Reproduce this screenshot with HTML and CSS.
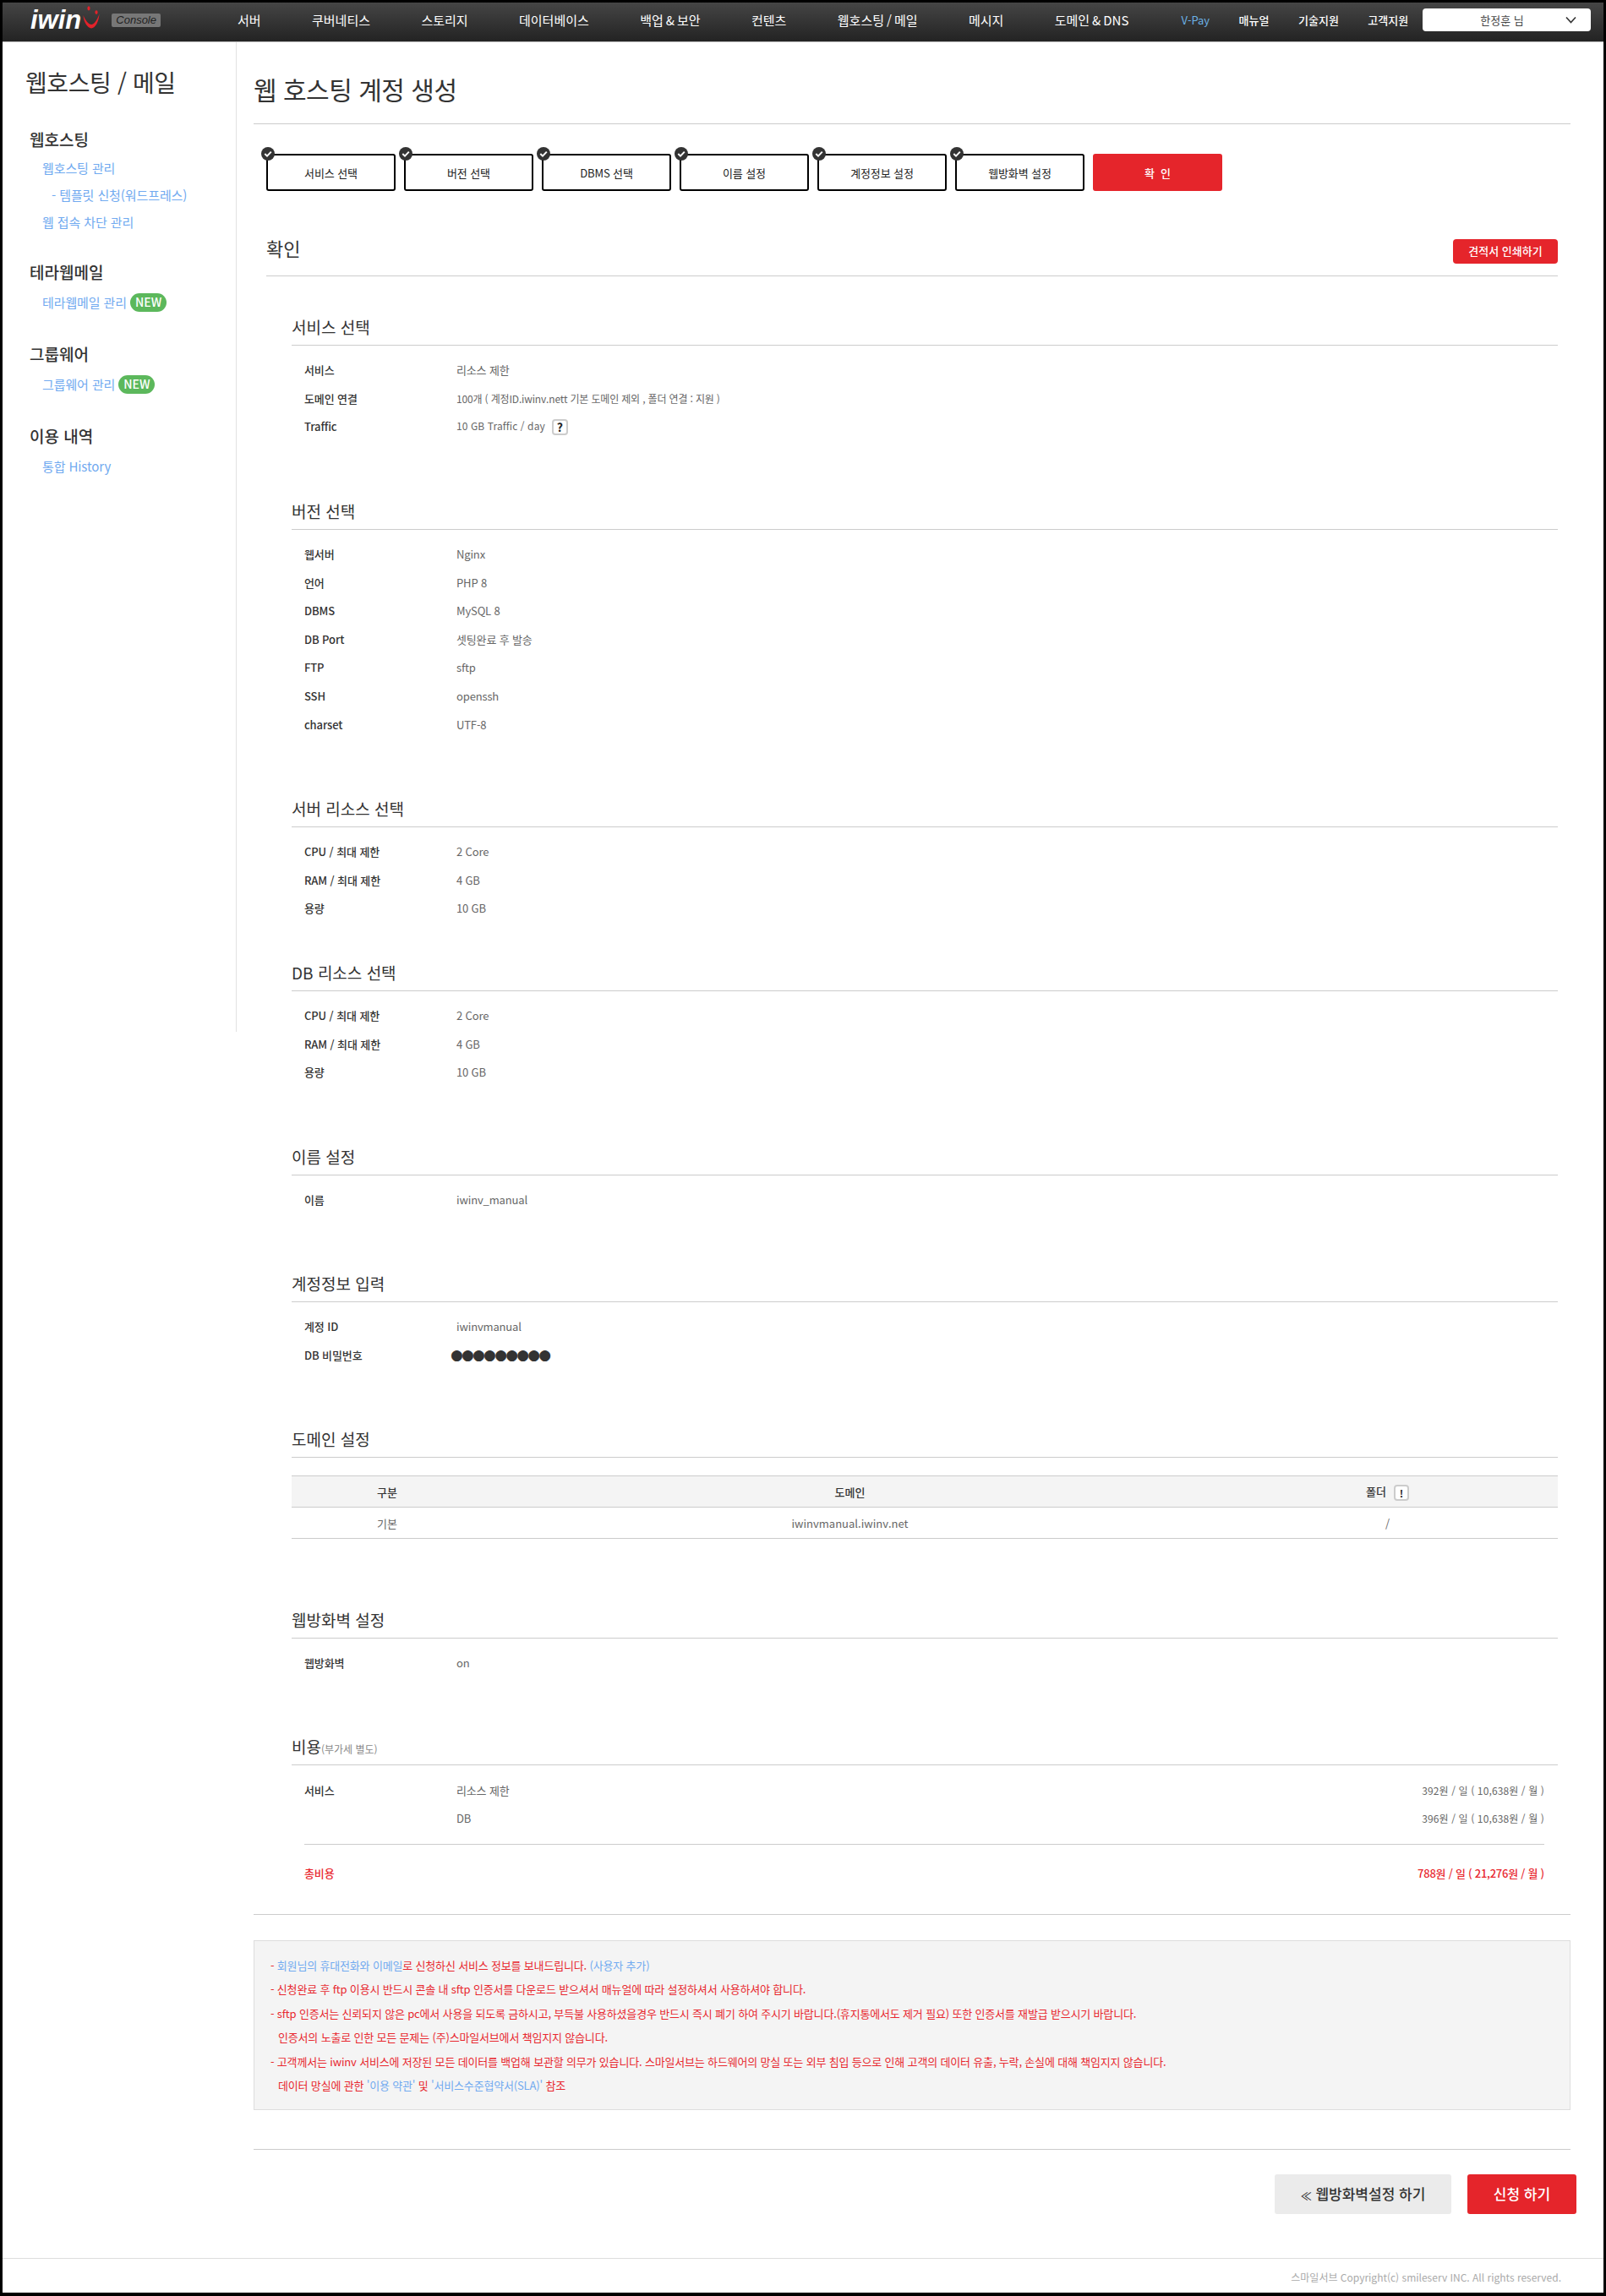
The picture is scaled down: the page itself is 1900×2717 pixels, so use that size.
FILE: index.html
```html
<!DOCTYPE html>
<html lang="ko">
<head>
<meta charset="utf-8">
<title>웹 호스팅 계정 생성</title>
<link rel="stylesheet" href="styles.css">
</head>
<body>
<div class="frame">
  <header class="topbar">
    <a class="logo">
      <span class="logo-word">iwin</span>
      <svg class="logo-smile" width="22" height="28" viewBox="0 0 22 28"><path d="M1.5 11 C2 20 7 26 11 26.5 C16 26.5 20 18 20.5 9.5 C18 16 15 21.5 11.5 22 C7.5 22 4 17 1.5 11 Z" fill="#e3222a"/><ellipse cx="8" cy="2.8" rx="1.6" ry="2.6" fill="#e3222a"/><ellipse cx="17" cy="7.6" rx="1.6" ry="2.4" fill="#e3222a"/></svg>
      <span class="logo-badge">Console</span>
    </a>
    <nav class="nav-main">
      <a>서버</a><a>쿠버네티스</a><a>스토리지</a><a>데이터베이스</a><a>백업 &amp; 보안</a><a>컨텐츠</a><a>웹호스팅 / 메일</a><a>메시지</a><a>도메인 &amp; DNS</a>
    </nav>
    <nav class="nav-side">
      <a class="vpay">V-Pay</a><a>매뉴얼</a><a>기술지원</a><a>고객지원</a>
    </nav>
    <div class="user-select">
      <span>한정훈 님</span>
      <svg class="chevron" width="13" height="9" viewBox="0 0 13 9"><path d="M1 1.5 L6.5 7.5 L12 1.5" fill="none" stroke="#333" stroke-width="1.6"/></svg>
    </div>
  </header>

  <div class="layout">
    <aside class="sidebar">
      <h2 class="side-title">웹호스팅 / 메일</h2>
      <div class="side-group">
        <h3>웹호스팅</h3>
        <a>웹호스팅 관리</a>
        <a class="sub-link">- 템플릿 신청(워드프레스)</a>
        <a>웹 접속 차단 관리</a>
      </div>
      <div class="side-group">
        <h3>테라웹메일</h3>
        <a>테라웹메일 관리 <span class="badge-new">NEW</span></a>
      </div>
      <div class="side-group">
        <h3>그룹웨어</h3>
        <a>그룹웨어 관리 <span class="badge-new">NEW</span></a>
      </div>
      <div class="side-group">
        <h3>이용 내역</h3>
        <a>통합 History</a>
      </div>
    </aside>

    <main class="main">
      <h1 class="page-title">웹 호스팅 계정 생성</h1>

      <ol class="steps">
        <li class="step done">서비스 선택<svg class="check" width="16" height="16" viewBox="0 0 16 16"><circle cx="8" cy="8" r="8" fill="#333"/><path d="M4.3 8 L7 10.6 L11.8 5.6" fill="none" stroke="#fff" stroke-width="2"/></svg></li>
        <li class="step done">버전 선택<svg class="check" width="16" height="16" viewBox="0 0 16 16"><circle cx="8" cy="8" r="8" fill="#333"/><path d="M4.3 8 L7 10.6 L11.8 5.6" fill="none" stroke="#fff" stroke-width="2"/></svg></li>
        <li class="step done">DBMS 선택<svg class="check" width="16" height="16" viewBox="0 0 16 16"><circle cx="8" cy="8" r="8" fill="#333"/><path d="M4.3 8 L7 10.6 L11.8 5.6" fill="none" stroke="#fff" stroke-width="2"/></svg></li>
        <li class="step done">이름 설정<svg class="check" width="16" height="16" viewBox="0 0 16 16"><circle cx="8" cy="8" r="8" fill="#333"/><path d="M4.3 8 L7 10.6 L11.8 5.6" fill="none" stroke="#fff" stroke-width="2"/></svg></li>
        <li class="step done">계정정보 설정<svg class="check" width="16" height="16" viewBox="0 0 16 16"><circle cx="8" cy="8" r="8" fill="#333"/><path d="M4.3 8 L7 10.6 L11.8 5.6" fill="none" stroke="#fff" stroke-width="2"/></svg></li>
        <li class="step done">웹방화벽 설정<svg class="check" width="16" height="16" viewBox="0 0 16 16"><circle cx="8" cy="8" r="8" fill="#333"/><path d="M4.3 8 L7 10.6 L11.8 5.6" fill="none" stroke="#fff" stroke-width="2"/></svg></li>
        <li class="step current">확 &nbsp;인</li>
      </ol>

      <div class="confirm">
        <div class="confirm-head">
          <h2>확인</h2>
          <a class="btn-print">견적서 인쇄하기</a>
        </div>

        <section class="block">
          <h3>서비스 선택</h3>
          <div class="rows">
            <div class="row"><span class="label">서비스</span><span class="value">리소스 제한</span></div>
            <div class="row"><span class="label">도메인 연결</span><span class="value value-sm">100개 ( 계정ID.iwinv.nett 기본 도메인 제외 , 폴더 연결 : 지원 )</span></div>
            <div class="row"><span class="label">Traffic</span><span class="value value-traffic">10 GB Traffic / day<span class="hint">?</span></span></div>
          </div>
        </section>

        <section class="block">
          <h3>버전 선택</h3>
          <div class="rows">
            <div class="row"><span class="label">웹서버</span><span class="value">Nginx</span></div>
            <div class="row"><span class="label">언어</span><span class="value">PHP 8</span></div>
            <div class="row"><span class="label">DBMS</span><span class="value">MySQL 8</span></div>
            <div class="row"><span class="label">DB Port</span><span class="value">셋팅완료 후 발송</span></div>
            <div class="row"><span class="label">FTP</span><span class="value">sftp</span></div>
            <div class="row"><span class="label">SSH</span><span class="value">openssh</span></div>
            <div class="row"><span class="label">charset</span><span class="value">UTF-8</span></div>
          </div>
        </section>

        <section class="block">
          <h3>서버 리소스 선택</h3>
          <div class="rows">
            <div class="row"><span class="label">CPU / 최대 제한</span><span class="value">2 Core</span></div>
            <div class="row"><span class="label">RAM / 최대 제한</span><span class="value">4 GB</span></div>
            <div class="row"><span class="label">용량</span><span class="value">10 GB</span></div>
          </div>
        </section>

        <section class="block block-tight">
          <h3>DB 리소스 선택</h3>
          <div class="rows">
            <div class="row"><span class="label">CPU / 최대 제한</span><span class="value">2 Core</span></div>
            <div class="row"><span class="label">RAM / 최대 제한</span><span class="value">4 GB</span></div>
            <div class="row"><span class="label">용량</span><span class="value">10 GB</span></div>
          </div>
        </section>

        <section class="block">
          <h3>이름 설정</h3>
          <div class="rows">
            <div class="row"><span class="label">이름</span><span class="value">iwinv_manual</span></div>
          </div>
        </section>

        <section class="block">
          <h3>계정정보 입력</h3>
          <div class="rows">
            <div class="row"><span class="label">계정 ID</span><span class="value">iwinvmanual</span></div>
            <div class="row"><span class="label">DB 비밀번호</span><span class="value dots">●●●●●●●●●</span></div>
          </div>
        </section>

        <section class="block block-table">
          <h3>도메인 설정</h3>
          <table class="domain-table">
            <thead>
              <tr><th class="col-a">구분</th><th class="col-b">도메인</th><th class="col-c">폴더<span class="hint hint-th">!</span></th></tr>
            </thead>
            <tbody>
              <tr><td>기본</td><td>iwinvmanual.iwinv.net</td><td>/</td></tr>
            </tbody>
          </table>
        </section>

        <section class="block">
          <h3>웹방화벽 설정</h3>
          <div class="rows">
            <div class="row"><span class="label">웹방화벽</span><span class="value">on</span></div>
          </div>
        </section>

        <section class="block">
          <h3>비용<small>(부가세 별도)</small></h3>
          <div class="rows">
            <div class="row"><span class="label">서비스</span><span class="value">리소스 제한</span><span class="price">392원 / 일 ( 10,638원 / 월 )</span></div>
            <div class="row"><span class="label"></span><span class="value">DB</span><span class="price">396원 / 일 ( 10,638원 / 월 )</span></div>
            <div class="row row-total"><span class="label">총비용</span><span class="price">788원 / 일 ( 21,276원 / 월 )</span></div>
          </div>
        </section>
      </div>

      <hr class="rule">

      <div class="notice">
        <p>- <a>회원님의 휴대전화와 이메일</a>로 신청하신 서비스 정보를 보내드립니다. <a>(사용자 추가)</a></p>
        <p>- 신청완료 후 ftp 이용시 반드시 콘솔 내 sftp 인증서를 다운로드 받으셔서 매뉴얼에 따라 설정하셔서 사용하셔야 합니다.</p>
        <p>- sftp 인증서는 신뢰되지 않은 pc에서 사용을 되도록 금하시고, 부득불 사용하셨을경우 반드시 즉시 폐기 하여 주시기 바랍니다.(휴지통에서도 제거 필요) 또한 인증서를 재발급 받으시기 바랍니다.</p>
        <p class="indent">인증서의 노출로 인한 모든 문제는 (주)스마일서브에서 책임지지 않습니다.</p>
        <p>- 고객께서는 iwinv 서비스에 저장된 모든 데이터를 백업해 보관할 의무가 있습니다. 스마일서브는 하드웨어의 망실 또는 외부 침입 등으로 인해 고객의 데이터 유출, 누락, 손실에 대해 책임지지 않습니다.</p>
        <p class="indent">데이터 망실에 관한 <a>'이용 약관'</a> 및 <a>'서비스수준협약서(SLA)'</a> 참조</p>
      </div>

      <div class="actions">
        <a class="btn btn-back"><span class="btn-arrows">≪</span> 웹방화벽설정 하기</a>
        <a class="btn btn-apply">신청 하기</a>
      </div>
    </main>
  </div>

  <footer class="footer">스마일서브 Copyright(c) smileserv INC. All rights reserved.</footer>
</div>
</body>
</html>
```
FILE: styles.css
```css
* { box-sizing: border-box; }
html, body { margin: 0; padding: 0; }
body {
  font-family: "Noto Sans CJK KR", "Noto Sans", sans-serif;
  font-size: 13px;
  color: #333;
  background: #fff;
}
h1, h2, h3, p, ol { margin: 0; padding: 0; }
ol { list-style: none; }

.frame {
  height: 2717px;
  border: solid #000;
  border-width: 3px 3px 4px 3px;
  display: flex;
  flex-direction: column;
  background: #fff;
}

/* header */
.topbar {
  flex: none;
  height: 47px;
  padding: 0 15px 5px 33px;
  display: flex;
  align-items: center;
  background: linear-gradient(#454545, #232323);
  border-bottom: 1px solid #bbb;
  color: #fff;
}
.logo { display: flex; align-items: center; width: 154px; flex: none; position: relative; }
.logo-word {
  font-family: "Liberation Sans", sans-serif;
  font-weight: 700;
  font-style: italic;
  font-size: 31px;
  line-height: 30px;
  color: #fff;
}
.logo-smile { margin-left: 1px; margin-top: -5px; flex: none; }
.logo-badge {
  margin-left: 13px;
  width: 58px;
  height: 16px;
  background: #777;
  border-radius: 2px;
  font-family: "Liberation Sans", sans-serif;
  font-style: italic;
  font-size: 13px;
  line-height: 16px;
  text-align: center;
  color: #222;
}
.nav-main { display: flex; gap: 60.4px; margin-left: 91px; font-size: 15px; word-spacing: -1.2px; flex: none; }
.nav-side { display: flex; gap: 34.5px; margin-left: 62px; font-size: 13px; font-weight: 500; flex: none; }
.vpay { color: #6cb2e6; font-weight: 400; }
.user-select {
  margin-left: auto;
  width: 199px;
  height: 27px;
  background: #fff;
  border-radius: 4px;
  display: flex;
  align-items: center;
  justify-content: center;
  position: relative;
  color: #444;
  font-size: 13px;
  padding-right: 11px;
}
.chevron { position: absolute; right: 17px; top: 9px; }

/* layout */
.layout { flex: 1; display: flex; align-items: flex-start; }
.sidebar {
  flex: none;
  width: 277px;
  height: 1171px;
  border-right: 1px solid #e2e2e2;
  padding: 26px 0 0 27px;
}
.side-title { font-size: 28px; font-weight: 400; line-height: 42px; letter-spacing: -0.4px; color: #333; white-space: nowrap; }
.side-group { padding-left: 5px; margin-bottom: 32px; }
.side-group:first-of-type { margin-top: 34px; margin-bottom: 30px; }
.side-group h3 { font-size: 19px; font-weight: 500; line-height: 26px; color: #333; margin-bottom: 7px; }
.side-group:first-of-type h3 { margin-bottom: 5px; }
.side-group a { display: block; font-size: 15px; line-height: 32px; letter-spacing: -0.1px; color: #71aaf0; padding-left: 15px; white-space: nowrap; }
.side-group a.sub-link { padding-left: 26px; }
.badge-new {
  display: inline-block;
  vertical-align: 1px;
  height: 22px;
  line-height: 21px;
  width: 43px;
  text-align: center;
  margin-left: 0;
  border-radius: 11px;
  background: #5cb85c;
  color: #fff;
  font-size: 14px;
  font-weight: 500;
  letter-spacing: 0;
}

.main { flex: none; width: 1617px; padding-left: 20px; padding-right: 39px; }
.page-title {
  font-size: 30px;
  font-weight: 400;
  line-height: 44px;
  letter-spacing: -0.5px;
  padding: 33px 0 19px;
  border-bottom: 1px solid #ccc;
  color: #333;
}
.steps { display: flex; gap: 10px; margin: 35px 0 0 15px; }
.step {
  position: relative;
  width: 153px;
  height: 44px;
  border: 2px solid #000;
  border-radius: 3px;
  background: #fff;
  color: #222;
  font-size: 13px;
  letter-spacing: -0.1px;
  display: flex;
  align-items: center;
  justify-content: center;
}
.step.current { background: #e5252b; border-color: #e5252b; color: #fff; font-weight: 500; }
.check { position: absolute; left: -8px; top: -10px; }

.confirm { margin: 0 15px; }
.confirm-head {
  margin-top: 54px;
  height: 47px;
  display: flex;
  justify-content: space-between;
  align-items: flex-start;
  border-bottom: 1px solid #ccc;
}
.confirm-head h2 { font-size: 22px; font-weight: 400; line-height: 30px; margin-top: -2px; }
.btn-print {
  margin-top: 3px;
  width: 124px;
  height: 29px;
  border-radius: 4px;
  background: #e5252b;
  color: #fff;
  font-size: 13px;
  font-weight: 500;
  line-height: 28px;
  text-align: center;
}

.block { margin: 46px 0 0 30px; }
.block + .block { margin-top: 69px; }
.block + .block.block-tight { margin-top: 45px; }
.block-table { margin-bottom: 81.5px; }
.block-table + .block { margin-top: 0; }
.block h3 {
  font-size: 19px;
  font-weight: 400;
  line-height: 28px;
  height: 36px;
  padding-bottom: 7px;
  border-bottom: 1px solid #ccc;
  color: #333;
}
.block h3 small { font-size: 12px; line-height: 1; color: #888; font-weight: 400; }
.rows { margin-top: 12px; padding: 0 16px 0 15px; }
.row { display: flex; align-items: center; height: 33.6px; }
.label { flex: none; width: 180px; font-weight: 500; letter-spacing: -0.1px; color: #333; }
.value { color: #666; font-weight: 400; letter-spacing: -0.15px; white-space: nowrap; }
.value-sm { font-size: 12px; letter-spacing: -0.16px; }
.value-traffic { font-size: 12px; letter-spacing: 0.1px; }
.price { margin-left: auto; color: #666; font-size: 12px; letter-spacing: 0.12px; }
.row-total {
  box-sizing: content-box;
  margin-top: 13px;
  border-top: 1px solid #ccc;
  padding-top: 17.5px;
}
.row-total .label { color: #e8282f; font-weight: 500; }
.row-total .price { color: #e8282f; font-size: 13px; font-weight: 500; letter-spacing: -0.25px; }
.hint {
  display: inline-block;
  width: 19px;
  height: 19px;
  margin-left: 8px;
  border: 2px solid #ccc;
  border-radius: 4px;
  background: #fff;
  color: #222;
  font-size: 14px;
  font-weight: 700;
  line-height: 15px;
  text-align: center;
  vertical-align: -2px;
}
.dots {
  font-family: "DejaVu Sans", sans-serif;
  font-size: 17px;
  line-height: 20px;
  letter-spacing: -1.8px;
  color: #333;
  margin-left: -7px;
}

.domain-table { width: 100%; margin-top: 21px; border-collapse: collapse; table-layout: fixed; }
.domain-table th, .domain-table td { height: 37px; padding: 0; text-align: center; font-size: 13px; }
.domain-table th { background: #f4f4f4; font-weight: 500; border-top: 1px solid #ccc; border-bottom: 1px solid #ccc; color: #333; }
.domain-table td { color: #666; border-bottom: 1px solid #ccc; }
.col-a { width: 226px; }
.col-b { width: 869px; }
.col-c { width: 403px; }
.hint-th { width: 18px; height: 19px; line-height: 15px; font-size: 12px; margin-left: 9px; vertical-align: -2px; }

.rule { margin: 31px 0 0; border: 0; border-top: 1px solid #ccc; height: 0; }
.notice {
  margin-top: 30px;
  height: 201px;
  padding: 15px 19px 0;
  background: #f4f4f4;
  border: 1px solid #ddd;
  color: #e8282f;
  font-size: 13px;
  letter-spacing: -0.17px;
}
.notice p { line-height: 28.5px; white-space: nowrap; }
.notice a { color: #71aaf0; }
.notice .indent { padding-left: 9px; }

.actions {
  margin-top: 46px;
  border-top: 1px solid #ccc;
  padding-top: 29px;
  display: flex;
  justify-content: flex-end;
  gap: 19px;
}
.btn {
  height: 47px;
  border-radius: 3px;
  font-size: 17px;
  font-weight: 500;
  line-height: 46px;
  text-align: center;
}
.btn-arrows { font-size: 13px; }
.btn-back { width: 209px; background: #ebebeb; color: #333; }
.btn-apply { width: 129px; margin-right: -7px; background: #e5252b; color: #fff; }

.footer {
  margin-top: auto;
  flex: none;
  height: 41px;
  border-top: 1px solid #ddd;
  padding-right: 50px;
  text-align: right;
  font-size: 12px;
  line-height: 44px;
  color: #aaa;
}
```
